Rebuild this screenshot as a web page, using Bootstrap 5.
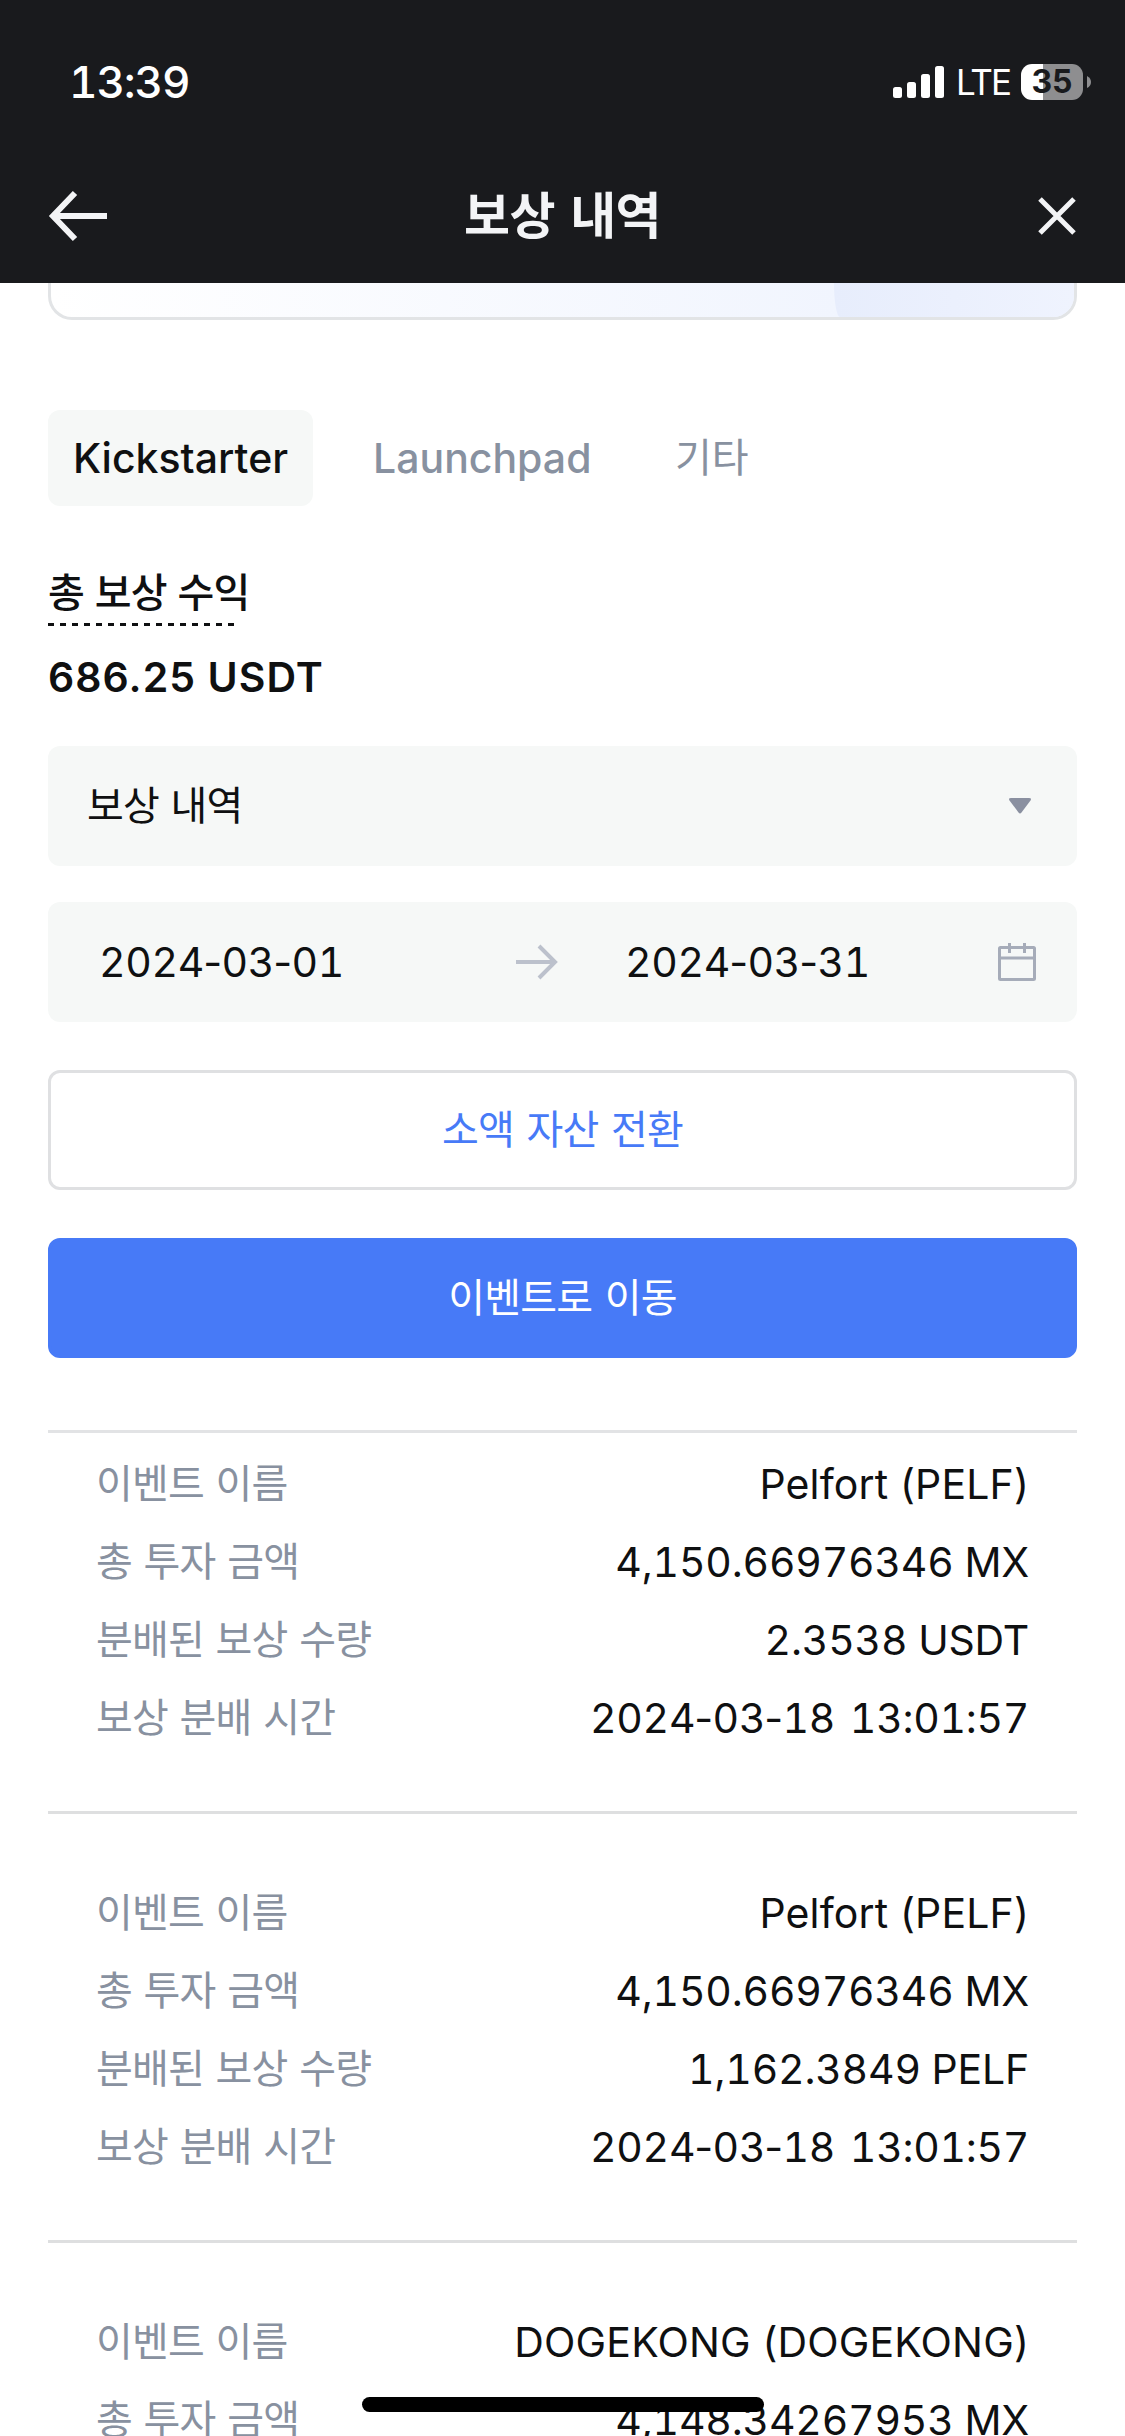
<!DOCTYPE html>
<html lang="ko">
<head>
<meta charset="utf-8">
<meta name="viewport" content="width=device-width, initial-scale=1">
<title>보상 내역</title>
<link href="https://cdn.jsdelivr.net/npm/bootstrap@5.3.0/dist/css/bootstrap.min.css" rel="stylesheet">
<style>
  body { font-family: Inter, "Noto Sans CJK KR", sans-serif; color: #0f1011; font-size: 41px; line-height: 78px; }
  .screen { width: 1125px; height: 2436px; background: #fff; }
  .ko { font-family: "Noto Sans CJK KR", Inter, sans-serif; font-size: 40px; letter-spacing: -.8px; word-spacing: 1.2px; }
  .num { font-variant-numeric: tabular-nums; letter-spacing: -.2px; }
  .stamp { letter-spacing: -.3px; word-spacing: 4px; }
  .dash { letter-spacing: -4.6px; margin-left: -4.6px; }
  .topbar { height: 283px; background: #191a1d; color: #f3f4f6; }
  .status { height: 164px; padding: 0 34px 0 69px; color: #fff; }
  .clock { font-size: 44px; font-weight: 500; letter-spacing: -1.1px; font-variant-numeric: tabular-nums; }
  .net { font-size: 35px; letter-spacing: -2px; margin: 0 11px 0 12px; }
  .battery { width: 62px; height: 36px; border-radius: 11px; background: linear-gradient(90deg, #fff 22px, #8e8e90 22px); color: #191a1d; font-size: 32px; font-weight: 700; line-height: 36px; }
  .titlebar { height: 104px; padding: 0 48px; }
  .title-action { width: 60px; }
  .page-title { font-size: 50px; font-weight: 600; letter-spacing: -.6px; word-spacing: 2px; line-height: 92px; height: 100px; }
  .promo { height: 37px; border: 3px solid #e2e4e6; border-top: 0; border-radius: 0 0 24px 24px; background: linear-gradient(90deg, #fff, #f1f5fe 77%); }
  .promo-art { width: 240px; border-radius: 0 0 0 6px / 0 0 0 34px; background: linear-gradient(90deg, #e7edfc, #eff3fe); }
  .content { padding: 0 48px; }
  .tab-row { margin-top: 90px; }
  .tab { height: 96px; line-height: 96px; font-weight: 500; color: #8891a0; }
  .tab.active { width: 265px; margin-right: 60px; border-radius: 12px; background: #f6f8f7; color: #0f1011; text-align: center; }
  .tab.launch { width: 302px; }
  .tab.etc { font-weight: 400; letter-spacing: 0; line-height: 91px; }
  .total-label { margin-top: 55px; height: 62px; line-height: 59px; font-weight: 500; word-spacing: .4px; }
  .dots { width: 187px; height: 3px; background: repeating-linear-gradient(90deg, #0f1011 0 6px, transparent 6px 12px); }
  .total { margin-top: 20px; line-height: 62px; font-weight: 600; letter-spacing: 1.05px; }
  .field { height: 120px; border-radius: 12px; background: #f6f8f7; }
  .picker { margin-top: 38px; padding: 0 46px 0 39px; }
  .picker .ko { line-height: 72px; height: 78px; }
  .dates { margin-top: 36px; padding: 0 41px 0 51px; }
  .dates .from { width: 417px; }
  .dates .to { margin-left: 67px; }
  .btn.wide { height: 120px; margin-top: 48px; border-radius: 12px; border-width: 3px; line-height: 108px; padding: 0 0 6px; word-spacing: 2px; }
  .btn.dust { border-color: #dfe0e2; color: #477af7; }
  .btn.go { background: #477af7; border-color: #477af7; color: #fff; }
  .records { margin-top: 72px; border-top: 3px solid #e2e3e5; }
  .record { height: 429px; padding: 60px 48px 0; border-bottom: 3px solid #dedfe0; }
  .record:first-child { height: 381px; padding-top: 12px; }
  .lbl { color: #8891a0; line-height: 73px; }
  .name { letter-spacing: .15px; }
  .home-bar { left: 362px; top: 2397px; width: 402px; height: 15px; border-radius: 8px; background: #000; }
</style>
<script src="https://cdn.jsdelivr.net/npm/bootstrap@5.3.0/dist/js/bootstrap.bundle.min.js"></script>
</head>
<body>
<div class="screen position-relative overflow-hidden">
  <header class="topbar">
    <div class="status d-flex align-items-center justify-content-between">
      <span class="clock">13:39</span>
      <div class="d-flex align-items-center">
        <svg width="51" height="32" viewBox="0 0 51 32" fill="#fff"><rect y="21" width="9" height="11" rx="2.500"/><rect x="14" y="16" width="9" height="16" rx="2.500"/><rect x="28" y="8" width="9" height="24" rx="2.500"/><rect x="42" width="9" height="32" rx="2.500"/></svg>
        <span class="net">LTE</span>
        <span class="battery text-center">35</span>
        <svg class="ms-1" width="4" height="12" viewBox="0 0 4 12" fill="#8e8e90"><path d="M0 0Q4 2 4 6T0 12Z"/></svg>
      </div>
    </div>
    <div class="titlebar d-flex align-items-center justify-content-between">
      <a class="title-action d-flex"><svg width="60" height="52" viewBox="0 0 60 52" fill="none" stroke="#f3f4f6" stroke-width="6"><path d="M59 26H5M27 3L5 26L27 49"/></svg></a>
      <h1 class="page-title ko m-0">보상 내역</h1>
      <a class="title-action d-flex justify-content-end"><svg width="40" height="40" viewBox="0 0 40 40" fill="none" stroke="#f3f4f6" stroke-width="5"><path d="M3 3L37 37M37 3L3 37"/></svg></a>
    </div>
  </header>
  <main class="content">
    <div class="promo overflow-hidden d-flex justify-content-end"><div class="promo-art"></div></div>
    <nav class="tab-row d-flex">
      <a class="tab active text-decoration-none">Kickstarter</a>
      <a class="tab launch text-decoration-none">Launchpad</a>
      <a class="tab etc ko text-decoration-none">기타</a>
    </nav>
    <div class="total-label ko">총 보상 수익</div>
    <div class="dots"></div>
    <div class="total">686.25 USDT</div>
    <div class="field picker d-flex align-items-center justify-content-between">
      <span class="ko">보상 내역</span>
      <svg width="22" height="16" viewBox="0 0 22 16" fill="#8a90a0"><path d="M2 0H20Q23 0 21.500 2.500L12.500 14.500Q11 16.500 9.500 14.500L.5 2.500Q-1 0 2 0Z"/></svg>
    </div>
    <div class="field dates d-flex align-items-center">
      <span class="num stamp from">2024<span class="dash">-</span>03<span class="dash">-</span>01</span>
      <svg width="42" height="36" viewBox="0 0 42 36" fill="none" stroke="#bcc1cc" stroke-width="4"><path d="M0 18H38M23 2L39 18L23 34"/></svg>
      <span class="num stamp to">2024<span class="dash">-</span>03<span class="dash">-</span>31</span>
      <svg class="ms-auto" width="38" height="38" viewBox="0 0 38 38" fill="none" stroke="#a6acb9" stroke-width="3"><rect x="1.500" y="4.500" width="35" height="32" rx="1"/><path d="M1.500 15H36.500M11.500 0V10M26.500 0V10"/></svg>
    </div>
    <button class="btn wide dust ko w-100 d-block">소액 자산 전환</button>
    <button class="btn wide go ko w-100 d-block">이벤트로 이동</button>
    <section class="records">
      <div class="record">
        <div class="d-flex justify-content-between"><span class="lbl ko">이벤트 이름</span><span class="name">Pelfort (PELF)</span></div>
        <div class="d-flex justify-content-between"><span class="lbl ko">총 투자 금액</span><span class="num">4,150.66976346 MX</span></div>
        <div class="d-flex justify-content-between"><span class="lbl ko">분배된 보상 수량</span><span class="num">2.3538 USDT</span></div>
        <div class="d-flex justify-content-between"><span class="lbl ko">보상 분배 시간</span><span class="num stamp">2024<span class="dash">-</span>03<span class="dash">-</span>18 13:01:57</span></div>
      </div>
      <div class="record">
        <div class="d-flex justify-content-between"><span class="lbl ko">이벤트 이름</span><span class="name">Pelfort (PELF)</span></div>
        <div class="d-flex justify-content-between"><span class="lbl ko">총 투자 금액</span><span class="num">4,150.66976346 MX</span></div>
        <div class="d-flex justify-content-between"><span class="lbl ko">분배된 보상 수량</span><span class="num">1,162.3849 PELF</span></div>
        <div class="d-flex justify-content-between"><span class="lbl ko">보상 분배 시간</span><span class="num stamp">2024<span class="dash">-</span>03<span class="dash">-</span>18 13:01:57</span></div>
      </div>
      <div class="record">
        <div class="d-flex justify-content-between"><span class="lbl ko">이벤트 이름</span><span class="name">DOGEKONG (DOGEKONG)</span></div>
        <div class="d-flex justify-content-between"><span class="lbl ko">총 투자 금액</span><span class="num">4,148.34267953 MX</span></div>
      </div>
    </section>
  </main>
  <div class="home-bar position-absolute"></div>
</div>
</body>
</html>
